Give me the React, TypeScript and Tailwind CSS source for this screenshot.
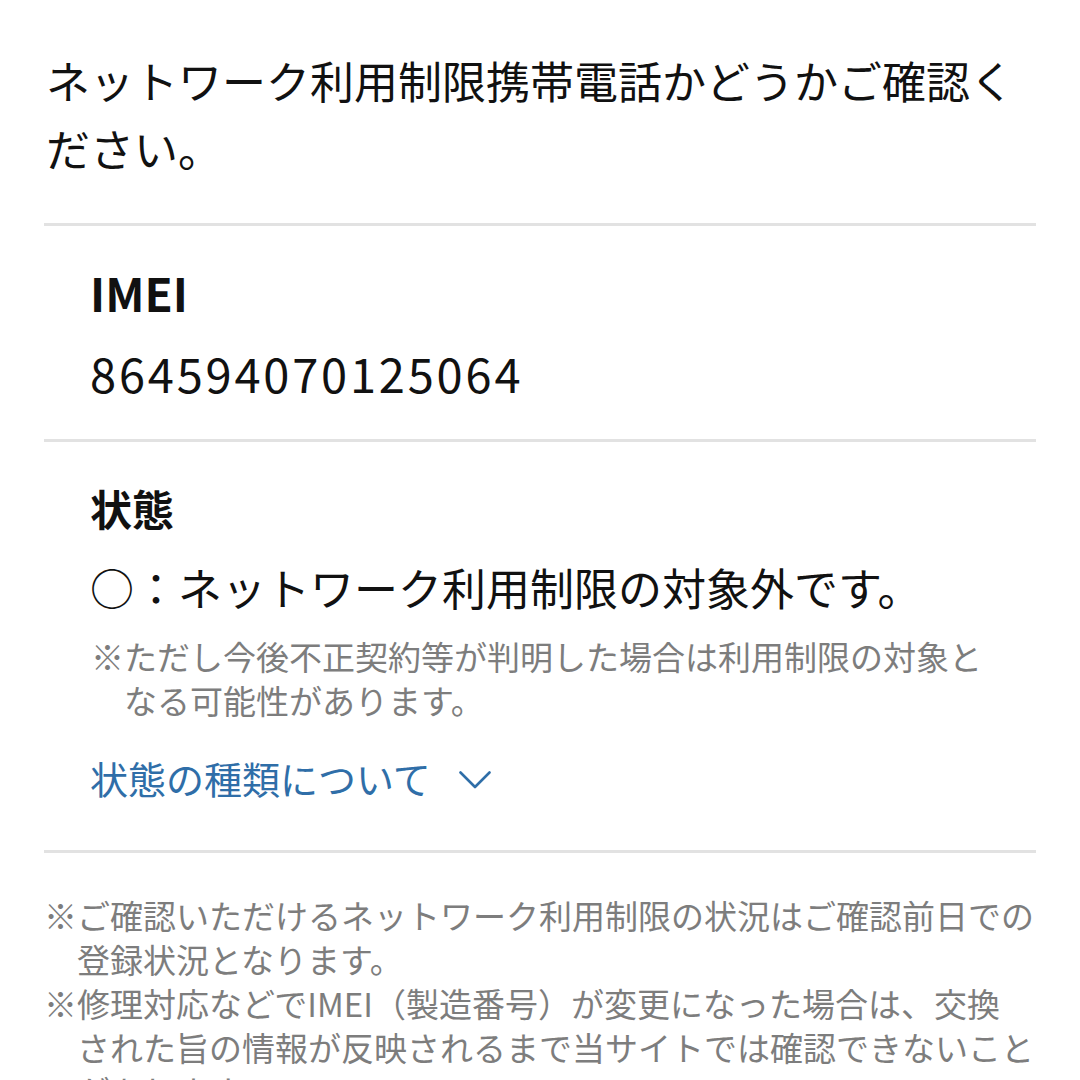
import React from "react";

const jp = { fontFamily: '"Noto Sans CJK JP", "Noto Sans", sans-serif' };

function Note({ lines, className }: { lines: string[]; className?: string }) {
  return (
    <div className={"flex text-[33px] leading-[44px] text-[#7d7d7d] " + (className ?? "")}>
      <span className="shrink-0">※</span>
      <span>
        {lines.map((l, i) => (
          <React.Fragment key={i}>
            {i > 0 && <br />}
            {l}
          </React.Fragment>
        ))}
      </span>
    </div>
  );
}

export default function App() {
  return (
    <div className="w-[1080px] h-[1080px] overflow-hidden bg-white px-[44px]" style={jp}>
      <div className="pt-[46px] pl-[2px] text-[44px] leading-[68px] text-[#111]">
        ネットワーク利用制限携帯電話かどうかご確認く
        <br />
        ださい。
      </div>
      <div className="mt-[41px] h-[3px] bg-[#e2e2e2]" />

      <div className="px-[46px]">
        <div className="mt-[36px] text-[46px] leading-[60px] font-bold text-[#111]">IMEI</div>
        <div className="mt-[21px] text-[47px] leading-[60px] tracking-[2.8px] text-[#111]">864594070125064</div>
      </div>
      <div className="mt-[36px] h-[3px] bg-[#e2e2e2]" />

      <div className="px-[46px]">
        <div className="mt-[36px] text-[42px] leading-[60px] font-bold text-[#111]">状態</div>
        <div className="mt-[19px] text-[44px] leading-[60px] text-[#111]">○：ネットワーク利用制限の対象外です。</div>
        <Note
          className="mt-[17px] pl-[1px]"
          lines={["ただし今後不正契約等が判明した場合は利用制限の対象と", "なる可能性があります。"]}
        />
        <div className="mt-[26px] flex items-center text-[38px] leading-[60px] text-[#2f6ea8]">
          <span>状態の種類について</span>
          <svg className="ml-[28px] mt-[4px]" width="32" height="18" viewBox="0 0 32 18" fill="none">
            <path d="M1.5 1.5 L16 16 L30.5 1.5" stroke="#2f6ea8" strokeWidth="2.6" strokeLinecap="round" strokeLinejoin="round" />
          </svg>
        </div>
      </div>
      <div className="mt-[42px] h-[3px] bg-[#e2e2e2]" />

      <div className="mt-[40px]">
        <Note lines={["ご確認いただけるネットワーク利用制限の状況はご確認前日での", "登録状況となります。"]} />
        <Note
          lines={[
            "修理対応などでIMEI（製造番号）が変更になった場合は、交換",
            "された旨の情報が反映されるまで当サイトでは確認できないこと",
            "があります。",
          ]}
        />
      </div>
    </div>
  );
}
